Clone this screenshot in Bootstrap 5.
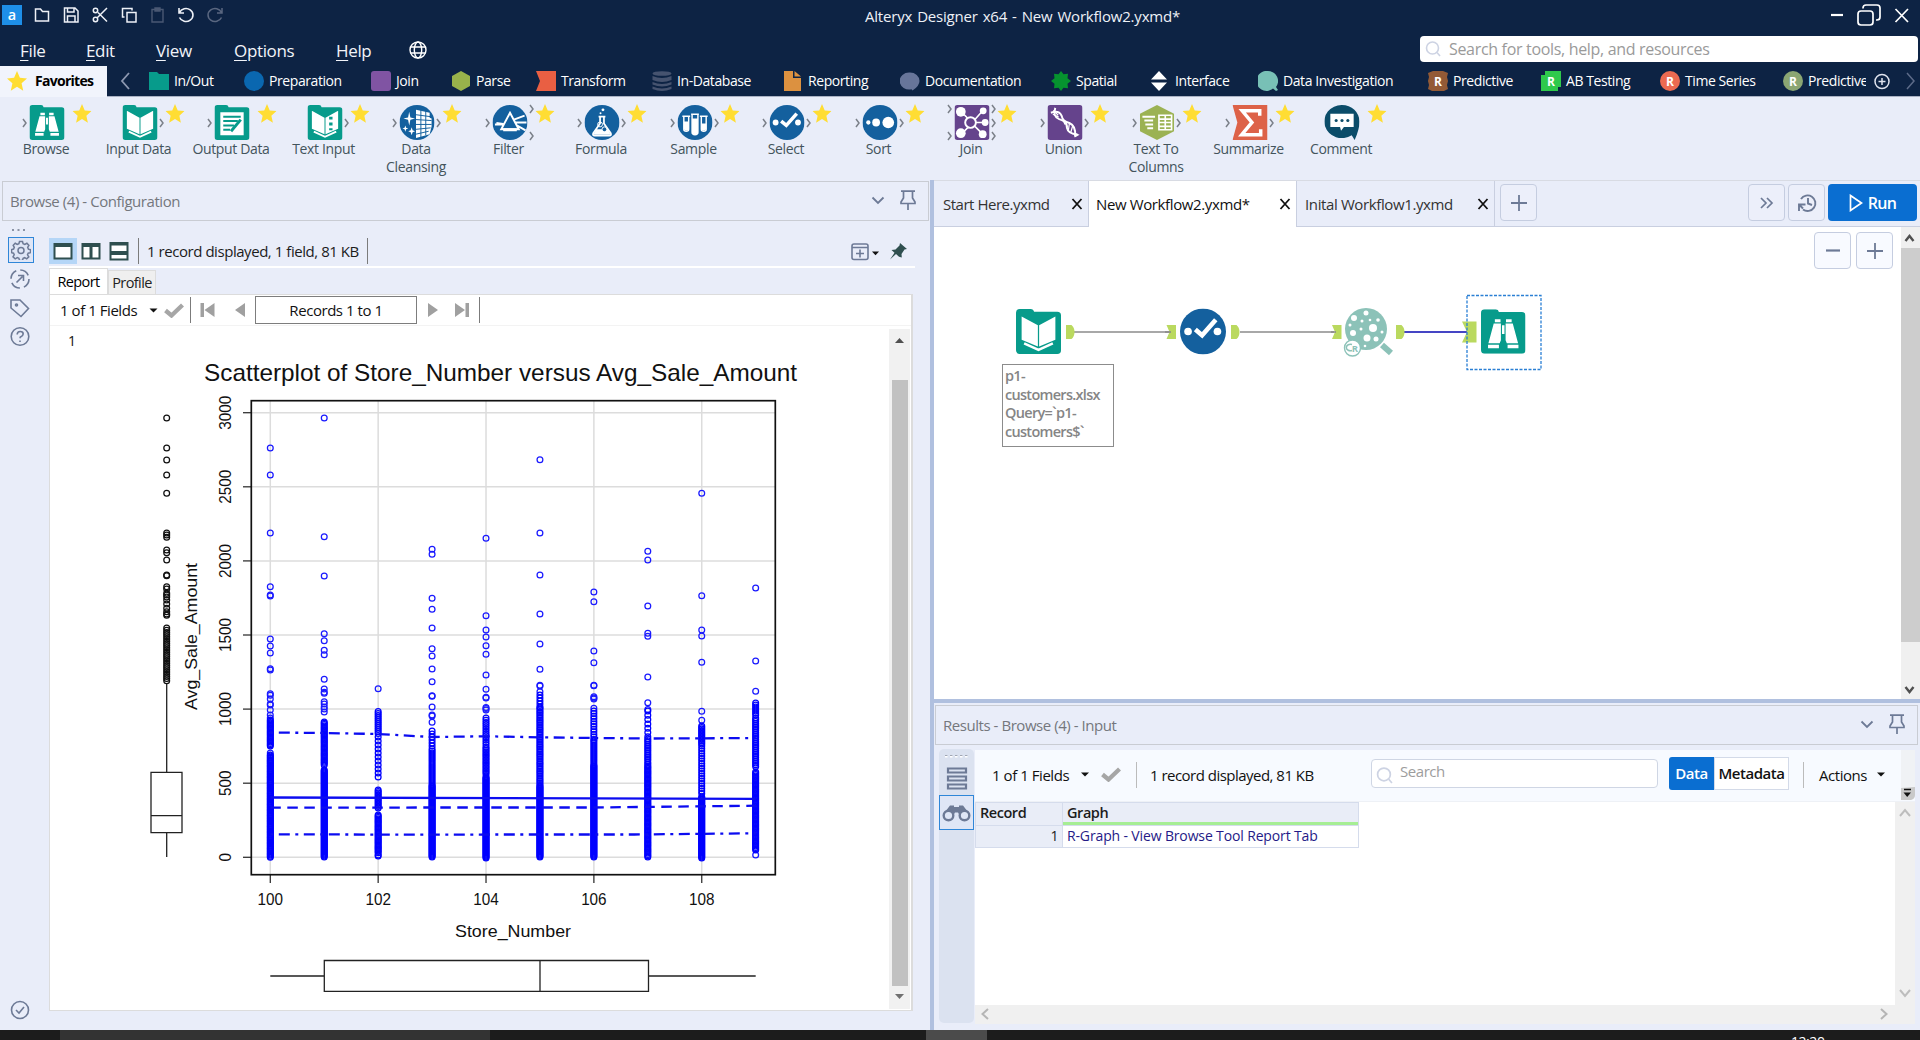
<!DOCTYPE html>
<html lang="en">
<head>
<meta charset="utf-8">
<title>Alteryx Designer x64 - New Workflow2.yxmd*</title>
<link href="https://cdn.jsdelivr.net/npm/bootstrap@5.3.0/dist/css/bootstrap.min.css" rel="stylesheet">
<style>
:root{--navy:#0d2344;--pane:#e9edf9;--line:#c9ccd3;--split:#b0c0df;--slate:#6d7a96;--blue:#0a6ed1}
body{width:1920px;height:1040px;overflow:hidden;background:var(--pane);font-family:"Open Sans","Noto Sans",sans-serif;font-size:15px;line-height:20px;letter-spacing:-.45px;color:#1c1c1c}
svg{display:block;flex:none}
svg text{letter-spacing:0}
.text-nowrap,span{white-space:nowrap}
.titlebar{height:30px;background:var(--navy);color:#eef1f7}
.quick{width:700px;padding-left:2px}
.quick svg{margin-right:9px}
.apptitle{width:484px;font-size:15px;letter-spacing:-.2px;word-spacing:1.3px;padding-top:1px;padding-left:165px}
.menubar{height:36px;background:var(--navy);color:#f2f4f9;font-size:17px;letter-spacing:-.35px}
.menuitem{display:block;padding-left:20px;padding-top:11px}
.menuitem::first-letter{text-decoration:underline;text-underline-offset:3px}
.globe{margin-top:11px}
.topsearch{width:498px;height:26px;background:#fff;border-radius:4px;color:#9a9a9a;font-size:16px;margin:0 2px 4px 0;padding:0 0 1px 5px;letter-spacing:-.32px}
.catbar{height:31px;background:var(--navy);color:#fff;font-size:14px;letter-spacing:-.42px;border-bottom:1px solid #aab2c4}
.fav{width:107px;height:31px;background:#f1f4fc;color:#000;font-weight:700;font-size:14px;letter-spacing:-.72px;padding-left:7px}
.cat svg{margin-right:5px}
.palette{height:83px;padding-top:7px}
.tool{width:92.5px;font-size:14px;line-height:17.5px;color:#43545c;text-align:center;letter-spacing:-.35px}
.tool .lab{white-space:normal;width:86px;margin:-2px auto 0 3px;padding:0;display:block}
.panehead{border:1px solid var(--line);height:40px;color:#74777d;padding-bottom:1px}
.panehead span{padding-left:7px}
.leftpane{width:930px;height:850px;padding:1px 1px 0 2px}
.splitter{width:4px;background:var(--split);height:850px}
.rail{width:47px;padding-top:8px;padding-left:6px}
.railbox{width:26px;height:26px;border:1px solid #2f86d8;background:#dfe6f6}
.leftbody{width:866px}
.viewbar{height:47px;border-bottom:2px solid #fff;padding-bottom:2px}
.vrule{width:1px;height:26px;background:#7b7b7b}
.viewbtn{width:28px;height:26px}
.viewbtn.on{background:#b5d6f7}
.rtab{height:24px;border:1px solid #dcdcdc;border-bottom:0;background:#efefef;color:#222;font-size:14.5px;letter-spacing:-.6px}
.rtab.on{background:#fff;height:26px;color:#000}
.report{width:864px;height:717px;border:1px solid #dcdcdc;border-right-width:2px;background:#fff}
.navrow{height:31px;border-bottom:1px solid #f3f3f3;color:#111}
.recbox{width:162px;height:28px;border:1px solid #7d7d7d;text-align:center;padding-top:3px}
.vscroll{width:21px;background:#f1f1f1}
.thumb{background:#c1c1c1}
.tabrow{height:47px;border-top:1px solid #d8dbe3;border-bottom:1px solid #c9cfe0}
.dtab{height:46px;border-right:1px solid #c9cfe0;color:#333;padding:0 5px 1px 9px;letter-spacing:-.48px}
.dtab.on{background:#fff;color:#111;height:47px;padding-left:7px;padding-bottom:2px;letter-spacing:-.38px}
.sqbtn{width:37px;height:37px;border:1px solid #c5cde0;border-radius:4px;background:#eceffa}
.zoomset .sqbtn{background:#f8faff}
.runbtn{width:89px;height:37px;background:var(--blue);border-radius:4px;color:#fff;font-weight:600;font-size:16px;letter-spacing:-.6px}
.canvas{height:472px;background:#fff}
.cscroll{width:19px;background:#f0f0f0}
.cscroll .thumb{background:#cdcdcd}
.note{left:68px;top:137px;width:112px;height:83px;border:1px solid #8c8c8c;color:#858585;font-weight:600;font-size:14.5px;line-height:18.7px;letter-spacing:-.7px;padding:2px 2px;background:#fff}
.note span{display:block}
.zoomset{right:27px;top:5px;gap:5px}
.resrail{width:35px;height:274px;background:#dbe2f0;border-radius:5px;margin:4px 1px 0 1px;padding-top:6px}
.resrail .railbox{width:35px;height:35px}
.resmain{width:940px;margin-top:5px}
.resbar{height:52px;background:#f7faff;border-bottom:1px solid #eef1f6;color:#111;padding-bottom:2px}
.resbar .vrule{background:#bbb}
.ressearch{width:287px;height:29px;border:1px solid #cfd6e4;border-radius:4px;background:#fff;color:#9d9d9d}
.segl{width:45px;height:33px;background:var(--blue);color:#fff;font-weight:600;border-radius:3px 0 0 3px}
.segr{width:75px;height:33px;background:#fff;border:1px solid #d3dae8;font-weight:600;color:#111}
.grid2{width:384px;border:1px solid #d5dcec}
.grid2 .hd{height:22px;background:#e9edf7;font-weight:600;font-size:14.5px}
.grid2 .c1{width:87px;border-right:1px solid #d5dcec}
.grid2 .rw{height:22px;border-top:1px solid #d5dcec;font-size:14px}
.linkish{color:#251a87;letter-spacing:-.14px}
.taskbar{height:10px;background:#1c1c1c;color:#fff;overflow:hidden}
</style>
</head>
<body class="d-flex flex-column">
<svg width="0" height="0" class="position-absolute">
<defs>
<symbol id="star" viewBox="0 0 20 20"><path fill="#ffdd33" d="M10 0l2.9 6.8 7.1.6-5.400 4.900 1.600 7.400-6.200-3.900-6.200 3.900 1.600-7.400L0 7.400l7.100-.6z"/></symbol>
<symbol id="fold" viewBox="0 0 36 36"><path fill="#079b8b" d="M0 3q0-3 3-3h9q2 0 2.500 2.200H33q3 0 3 3V33q0 3-3 3H3q-3 0-3-3z"/></symbol>
<symbol id="browse" viewBox="0 0 36 36"><use href="#fold"/><g fill="#fff"><path d="M11.200 8h4.600v2.500h-4.600zM20.200 8h4.600v2.500h-4.600zM10.300 11.500h5.800V25l-1 2.500H6zM25.700 11.500h-5.800V25l1 2.500H30zM17 13h2v7h-2zM5.700 28.700h8.800v2.800H5.700zM21.500 28.700h8.800v2.800h-8.800z"/></g></symbol>
<symbol id="input" viewBox="0 0 36 36"><use href="#fold"/><g fill="#fff"><path d="M4.500 6l13 7v17l-13-5.500zM31.500 6l-13 7v17l13-5.500z"/></g><path d="M6.500 27.500l11.500 5.200 11.500-5.200" fill="none" stroke="#fff" stroke-width="2"/></symbol>
<symbol id="output" viewBox="0 0 36 36"><use href="#fold"/><path d="M6 7.500h24V31H6z" fill="#fff"/><path d="M9 12h18M9 16.500h15M9 21h11M9 25.500h7" stroke="#079b8b" stroke-width="2"/><path d="M17 27l10-12" stroke="#079b8b" stroke-width="3"/></symbol>
<symbol id="textin" viewBox="0 0 36 36"><use href="#fold"/><path d="M4.500 6l13 7v17l-13-5.500zM31.500 6l-13 7v17l13-5.500z" fill="#fff"/><path d="M6.500 27.500l11.500 5.200 11.500-5.200" fill="none" stroke="#fff" stroke-width="2"/><path d="M24 12v3M24 18v3M24 24v2" stroke="#079b8b" stroke-width="3.500"/></symbol>
<symbol id="disc" viewBox="0 0 36 36"><circle cx="18" cy="18" r="18" fill="#14609e"/></symbol>
<symbol id="cleanse" viewBox="0 0 36 36"><use href="#disc"/><path fill="#fff" d="M10 7l1.200 5.800L16 14l-4.800 1.200L10 21l-1.200-5.800L4 14l4.800-1.200zM6 21l.8 2.500 2.200.7-2.200.7L6 27.500l-.8-2.600-2.200-.7 2.200-.7zM12.500 23l1 3 2.500 1-2.500 1-1 3-1-3-2.500-1 2.500-1zM17 5l14 3v5l2 1v8l-2 8-14 4z"/><path d="M17 10l15 2M17 15l16 1M17 20h16M17 25l15-1.500M17 30l13-3M22 5v28M27 6v25" stroke="#14609e" stroke-width="1"/></symbol>
<symbol id="filter" viewBox="0 0 36 36"><use href="#disc"/><path d="M18 8l9 17H9zM2.500 20h9M22 15l11-4M23 18l12 0M25 21l9 5M4 18.500l7 1" fill="none" stroke="#fff" stroke-width="2"/><path d="M11 25.500h14" stroke="#fff" stroke-width="3"/></symbol>
<symbol id="formula" viewBox="0 0 36 36"><use href="#disc"/><path d="M14.500 12h7M16 12v7L9 29q-1 2.500 1.500 2.500h15q2.500 0 1.500-2.500L20 19v-7" fill="none" stroke="#fff" stroke-width="1.800"/><path d="M12 25h12l3 5.500H9z" fill="#fff"/><circle cx="19" cy="5" r="1.500" fill="#fff"/><circle cx="16.500" cy="8.500" r="1" fill="#fff"/><circle cx="16" cy="20" r="2.500" fill="none" stroke="#fff"/><circle cx="20.500" cy="25" r="2.500" fill="#14609e" stroke="#fff"/></symbol>
<symbol id="sample" viewBox="0 0 36 36"><use href="#disc"/><g fill="none" stroke="#fff" stroke-width="1.500"><path d="M5 11.500h8M14 9.500h8M23 11.500h8M6.500 11v14q0 2 2.500 2t2.500-2V11M15 9v19q0 2.500 3 2.500t3-2.500V9M24.500 11v14q0 2 2.500 2t2.500-2V11"/></g><path d="M6.500 17h5v8q-2.500 3-5 0zM15 14h6v15q-3 2-6 0zM24.500 19h5v6q-2.500 3-5 0z" fill="#fff"/></symbol>
<symbol id="select" viewBox="0 0 36 36"><use href="#disc"/><circle cx="6.300" cy="18" r="3" fill="#fff"/><circle cx="29.300" cy="18" r="3" fill="#fff"/><path d="M12 16.500l5.300 4.500L28 8.800" fill="none" stroke="#fff" stroke-width="3.600"/></symbol>
<symbol id="sort" viewBox="0 0 36 36"><use href="#disc"/><circle cx="6" cy="18" r="2.200" fill="#fff"/><circle cx="14" cy="18" r="4" fill="#fff"/><circle cx="26.500" cy="18" r="6" fill="#fff"/></symbol>
<symbol id="join" viewBox="0 0 36 36"><rect width="36" height="36" rx="3" fill="#65438c"/><g stroke="#fff" stroke-width="1.600"><path d="M7 7l8 8M29 6l-8 9M7 30l8-8M29 30l-8-8M21 18h9"/></g><circle cx="16.500" cy="18" r="5.500" fill="#65438c" stroke="#fff" stroke-width="2"/><g fill="#fff"><circle cx="6.500" cy="7" r="5"/><circle cx="29.500" cy="6" r="3.500"/><circle cx="31.500" cy="18" r="3.500"/><circle cx="6.500" cy="29" r="5"/><circle cx="29" cy="30" r="4"/></g></symbol>
<symbol id="union" viewBox="0 0 36 36"><rect width="36" height="36" rx="3" fill="#65438c"/><g fill="none" stroke="#fff"><path d="M8 3q-3 9 4 11.500q8 2 8 9q1 6 11 7" stroke-width="2"/><path d="M3.500 8q8-3 11 3q1 6 8 7.500q7 3 6 14" stroke-width="2"/><path d="M6 5.500l5 5M5.500 9.500l6 3M16 15l2 5M19 17l1.500 6M22.500 19l-1 7M26 21l-2 7" stroke-width="1.300"/></g><path d="M27 28l6 2.500-5 3z" fill="#fff"/></symbol>
<symbol id="t2c" viewBox="0 0 36 36"><path fill="#9bb253" d="M18 0l17.500 9v18L18 36 .5 27V9z"/><g stroke="#fff" stroke-width="2"><path d="M3 12h13M5 16h9M6 20h8M8 24h6"/></g><path d="M20 10.500h13v15H20zM20 14.500h13M20 18h13M20 22h13M26.500 10v16" fill="none" stroke="#fff" stroke-width="1.700"/></symbol>
<symbol id="sum" viewBox="0 0 36 36"><path fill="#dd6248" d="M0 0h36v36H0l5-18z"/><path d="M28 11V6H10l10 12L9.500 30.500H29V25" fill="none" stroke="#fff" stroke-width="3.600"/></symbol>
<symbol id="comment" viewBox="0 0 36 36"><path fill="#0b4c69" d="M18 0a18 17 0 0 1 18 17q0 8-5 19l-3-5A18 17 0 1 1 18 0z"/><path fill="#fff" d="M6 9h24v13.500H20l-3 4-1-4H6z"/><g fill="#0b4c69"><circle cx="12" cy="16" r="1.600"/><circle cx="18" cy="16" r="1.600"/><circle cx="24" cy="16" r="1.600"/></g></symbol>
<symbol id="pin" viewBox="0 0 16 21"><path d="M1 1.200h14M3.500 1.500v6.500L1 12v1.500h14V12l-2.500-4V1.500M8 13.500V20" fill="none" stroke="#6d7a96" stroke-width="1.700"/></symbol>
<symbol id="chev" viewBox="0 0 14 9"><path d="M1.500 1.500L7 7l5.500-5.500" fill="none" stroke="#6d7a96" stroke-width="1.800"/></symbol>
<symbol id="check" viewBox="0 0 20 15"><path d="M1.500 7.500l6 5L18.500 2" fill="none" stroke="#a6a6a6" stroke-width="4.300"/></symbol>
<symbol id="lens" viewBox="0 0 16 16"><circle cx="7.500" cy="7" r="6" fill="none" stroke="#cdd3e3" stroke-width="1.600"/><path d="M12 11.500l3 3.500" stroke="#cdd3e3" stroke-width="1.600"/></symbol>
<symbol id="xx" viewBox="0 0 12 12"><path d="M1.500 1l9 10M10.500 1l-9 10" stroke="#111" stroke-width="1.800"/></symbol>
<symbol id="plus" viewBox="0 0 16 16"><path d="M8 0v16M0 8h16" stroke="#6d7a96" stroke-width="1.800"/></symbol>
<symbol id="caret" viewBox="0 0 8 5"><path d="M0 .5h8L4 4.500z" fill="#111"/></symbol>
</defs>
</svg>

<header>
 <div class="titlebar d-flex">
  <div class="quick d-flex align-items-center">
   <svg width="20" height="20" viewBox="0 0 20 20"><rect width="20" height="20" fill="#1e8fe8"/><text x="10" y="14.500" font-size="14.500" font-weight="600" font-family="Open Sans" text-anchor="middle" fill="#fff">a</text></svg>
   <svg width="20" height="18" viewBox="0 0 20 18"><path d="M4.500 3h5l2 2.500h6V15h-13z" fill="none" stroke="#eef1f7" stroke-width="1.500"/></svg>
   <svg width="20" height="18" viewBox="0 0 20 18"><path d="M4.500 2H15l3 3v11H4.500zM7.500 2v4H14V2M7.500 16v-6H15v6" fill="none" stroke="#eef1f7" stroke-width="1.500"/></svg>
   <svg width="20" height="18" viewBox="0 0 20 18"><path d="M18 2L8 12M9 6.500l9 9" stroke="#eef1f7" stroke-width="1.500"/><circle cx="6.500" cy="4.500" r="2.200" fill="none" stroke="#eef1f7" stroke-width="1.500"/><circle cx="6.500" cy="13.500" r="2.200" fill="none" stroke="#eef1f7" stroke-width="1.500"/></svg>
   <svg width="20" height="18" viewBox="0 0 20 18"><path d="M9 6.500h9V16H9zM6.500 11h-2V2.500H14v2" fill="none" stroke="#eef1f7" stroke-width="1.500"/></svg>
   <svg width="20" height="18" viewBox="0 0 20 18"><path d="M5 3.500h11V16H5zM8 2h5v3H8z" fill="none" stroke="#4a5873" stroke-width="1.400"/></svg>
   <svg width="20" height="18" viewBox="0 0 20 18"><path d="M3 2v5h5M3.500 6.500a7 6.500 0 1 1 0 5" fill="none" stroke="#eef1f7" stroke-width="1.600"/></svg>
   <svg width="20" height="18" viewBox="0 0 20 18"><path d="M17 2v5h-5M16.500 6.500a7 6.500 0 1 0 0 5" fill="none" stroke="#5a6780" stroke-width="1.500"/></svg>
  </div>
  <div class="apptitle d-flex align-items-center"><span>Alteryx Designer x64 - New Workflow2.yxmd*</span></div>
  <div class="d-flex align-items-center ms-auto pe-2">
   <svg width="84" height="26" viewBox="0 0 84 26"><path d="M3 13h12" stroke="#fff" stroke-width="2.200"/><g fill="none" stroke="#fff" stroke-width="1.700"><rect x="30" y="9" width="15" height="14" rx="3"/><path d="M35 6.500V6q0-3 3-3h11q3 0 3 3v9q0 3-3 3h-1"/><path d="M67.500 7l12.500 13M80 7L67.500 20"/></g></svg>
  </div>
 </div>
 <div class="menubar d-flex">
  <nav class="d-flex">
   <span class="menuitem" style="width:66px">File</span><span class="menuitem" style="width:70px">Edit</span><span class="menuitem" style="width:78px">View</span><span class="menuitem" style="width:102px">Options</span><span class="menuitem" style="width:93px">Help</span>
   <svg width="18" height="18" viewBox="0 0 18 18" class="globe align-self-start" fill="none" stroke="#fff" stroke-width="1.400"><circle cx="9" cy="9" r="8"/><ellipse cx="9" cy="9" rx="3.700" ry="8"/><path d="M1.500 6h15M1.500 12h15"/></svg>
  </nav>
  <div class="topsearch ms-auto d-flex align-items-center mt-auto"><svg width="16" height="16"><use href="#lens"/></svg><span class="ps-2">Search for tools, help, and resources</span></div>
 </div>
 <div class="catbar d-flex align-items-center">
  <div class="fav d-flex align-items-center"><svg width="20" height="20"><use href="#star"/></svg><span class="ps-2">Favorites</span></div>
  <svg width="42" height="18" viewBox="0 0 42 18"><path d="M22 1l-7 8 7 8" fill="none" stroke="#8d98b1" stroke-width="1.800"/></svg>
  <div id="cats" class="d-flex overflow-hidden"></div>
  <svg width="50" height="20" viewBox="0 0 50 20" class="ms-1" fill="none" stroke="#dfe3ee" stroke-width="1.500"><circle cx="12" cy="10.500" r="7"/><path d="M12 7v7M8.500 10.500h7"/><path d="M37 2l7 8-7 8" stroke="#5d6b89"/></svg>
 </div>
 <div class="palette d-flex" id="palette"></div>
</header>

<main class="d-flex">
 <section class="leftpane">
  <div class="panehead d-flex align-items-center"><span>Browse (4) - Configuration</span><svg class="ms-auto" width="14" height="9"><use href="#chev"/></svg><svg width="16" height="21" style="margin:0 12px 0 15px"><use href="#pin"/></svg></div>
  <div class="d-flex">
   <aside class="rail d-flex flex-column">
    <svg width="26" height="8" viewBox="0 0 26 8" fill="#8b93a5"><path d="M4 0h2v2H4zM9.500 0h2v2h-2zM15 0h2v2h-2z"/></svg>
    <div class="railbox d-flex align-items-center justify-content-center"><svg width="20" height="20" viewBox="0 0 20 20" fill="none" stroke="#6d7a96" stroke-width="1.500"><path d="M8.500 1.500h3l.6 2.300 1.700.7 2.100-1.200 2 2.100-1.200 2 .7 1.700 2.100.6v3l-2.300.5-.7 1.600 1.300 2-2.100 2.100-2-1.200-1.600.7-.6 2.100h-3l-.6-2.200-1.600-.7-2.100 1.200L2 16.800l1.200-2-.7-1.600-1.900-.5V9.600l2-.5.7-1.700L2.200 5.300l2-2 2.100 1.200 1.600-.7z"/><circle cx="10" cy="10.500" r="3"/></svg></div>
    <svg width="24" height="88" viewBox="0 0 24 88" fill="none" stroke="#6d7a96" stroke-width="1.600"><circle cx="12" cy="16" r="9" stroke-dasharray="10 4.140"/><path d="M8.500 19.500l6-6M10 12.500h5.500V18"/><path d="M3 37h9l8.500 8.500-7.500 8-10-8.500z"/><circle cx="8.500" cy="42" r="1"/><circle cx="12" cy="73.500" r="8.800"/><path d="M9.200 71.500q0-3 3-3t3 2.500q0 1.700-3 3.200v1"/><path d="M12 77.500v1.600"/></svg>
    <svg width="20" height="20" viewBox="0 0 20 20" fill="none" stroke="#6d7a96" stroke-width="1.600" style="margin:649px 0 0 2px"><circle cx="10" cy="10" r="8.500"/><path d="M6 10l3 3 5-6"/></svg>
   </aside>
   <div class="leftbody">
    <div class="viewbar d-flex align-items-end">
     <div class="viewbtn on d-flex align-items-center justify-content-center"><svg width="20" height="20" viewBox="0 0 20 20"><path d="M1.500 3h17v14.500h-17z" fill="#fff" stroke="#2f4f4f" stroke-width="2"/><path d="M1 2h18v4H1z" fill="#2f4f4f"/></svg></div>
     <div class="viewbtn d-flex align-items-center justify-content-center"><svg width="20" height="20" viewBox="0 0 20 20"><path d="M1.500 3h17v14.500h-17z" fill="#fff" stroke="#2f4f4f" stroke-width="2"/><path d="M1 2h18v4H1zM8.500 3h3v15h-3z" fill="#2f4f4f"/></svg></div>
     <div class="viewbtn d-flex align-items-center justify-content-center"><svg width="20" height="20" viewBox="0 0 20 20"><path d="M1.500 2h17v16.500h-17z" fill="#fff" stroke="#2f4f4f" stroke-width="2"/><path d="M1 1h18v3.500H1zM1 10h18v4H1z" fill="#2f4f4f"/></svg></div>
     <div class="vrule" style="margin:0 8px 0 5px"></div><span style="margin-bottom:3px">1 record displayed, 1 field, 81 KB</span><div class="vrule" style="margin-left:8px"></div>
     <svg class="ms-auto" width="58" height="24" viewBox="0 0 58 24"><g fill="none" stroke="#6d7a96" stroke-width="1.600"><rect x="1" y="4" width="16" height="15.500" rx="2"/><path d="M1 7.500h16M9 9.500v8M5 13.500h8"/></g><path d="M21 11.500h7l-3.500 3.800z" fill="#111"/><path d="M49 3l7 6-2.500.5-3 4.500.3 3.500-2.800-.8-3-2.600-6 5.500 4.500-6.800-3-2.700 4-.6 4-4z" fill="#2f4f4f"/></svg>
     <div style="width:6px"></div>
    </div>
    <div class="d-flex align-items-end" style="height:26px">
     <div class="rtab on d-flex align-items-center justify-content-center" style="width:59px">Report</div><div class="rtab d-flex align-items-center justify-content-center" style="width:48px">Profile</div>
    </div>
    <div class="report">
     <div class="navrow d-flex align-items-center">
      <span style="width:99px;padding-left:10px">1 of 1 Fields</span><svg width="9" height="5"><use href="#caret"/></svg><svg width="20" height="15" style="margin:0 6px 0 6px"><use href="#check"/></svg><div class="vrule"></div>
      <svg width="64" height="16" viewBox="0 0 64 16" fill="#a0a0a0"><path d="M9.500 1H13v14H9.500zM23.500 1v14l-10-7zM54 1v14l-10-7z"/></svg>
      <div class="recbox">Records 1 to 1</div>
      <svg width="62" height="16" viewBox="0 0 62 16" fill="#a0a0a0"><path d="M11 1v14l10-7zM38 1v14l10-7zM48.500 1H52v14h-3.500z"/></svg><div class="vrule"></div>
     </div>
     <div class="d-flex" style="height:684px">
      <svg id="plot" width="839" height="684" viewBox="50 326 839 684" font-family="Liberation Sans" fill="#111"></svg>
      <div class="vscroll d-flex flex-column align-items-center" style="height:680px;margin-top:3px"><svg width="21" height="51" viewBox="0 0 21 51"><path d="M6 14h9l-4.500-5z" fill="#505050"/></svg><div class="thumb" style="width:16px;height:606px"></div><svg width="21" height="22" viewBox="0 0 21 22"><path d="M6 8h9l-4.500 5z" fill="#707070"/></svg></div>
     </div>
    </div>
   </div>
  </div>
 </section>
 <div class="splitter"></div>
 <section class="flex-grow-1">
  <div class="tabrow d-flex">
   <div class="dtab d-flex align-items-center justify-content-between" style="width:155px"><span>Start Here.yxmd</span><svg width="12" height="12"><use href="#xx"/></svg></div>
   <div class="dtab on d-flex align-items-center justify-content-between" style="width:208px"><span>New Workflow2.yxmd*</span><svg width="12" height="12"><use href="#xx"/></svg></div>
   <div class="dtab d-flex align-items-center justify-content-between" style="width:198px;padding-left:8px;letter-spacing:-.38px"><span>Inital Workflow1.yxmd</span><svg width="12" height="12"><use href="#xx"/></svg></div>
   <div class="sqbtn d-flex align-items-center justify-content-center" style="margin:3px 0 0 5px"><svg width="16" height="16"><use href="#plus"/></svg></div>
   <div class="d-flex ms-auto" style="gap:3px;margin:3px 3px 0 0">
    <div class="sqbtn d-flex align-items-center justify-content-center"><svg width="14" height="12" viewBox="0 0 14 12" fill="none" stroke="#6d7a96" stroke-width="1.700"><path d="M1 1l5 5-5 5M7 1l5 5-5 5"/></svg></div>
    <div class="sqbtn d-flex align-items-center justify-content-center"><svg width="20" height="20" viewBox="0 0 20 20" fill="none" stroke="#6d7a96" stroke-width="1.900"><path d="M4 6a7.800 7.800 0 1 1 2 10.500M2 18v-6.500h6.500M2 11.500l4 4M11 5v5.500l4 1.500"/></svg></div>
    <div class="runbtn d-flex align-items-center justify-content-center"><svg width="14" height="18" viewBox="0 0 14 18"><path d="M1.500 1.500l11 7.500-11 7.500z" fill="none" stroke="#fff" stroke-width="1.700"/></svg><span style="padding-left:5px">Run</span></div>
   </div>
  </div>
  <div class="canvas d-flex position-relative">
   <svg width="967" height="472" viewBox="934 227 967 472" class="flex-shrink-0">
    <path d="M1074 332H1170M1240 332H1334" stroke="#a8a8a8" stroke-width="2"/><path d="M1404 332H1468" stroke="#4545c4" stroke-width="2.200"/>
    <g fill="#bad95f"><path d="M1066 325h5.500q3 2.500 3 7t-3 7h-5.500z"/><path d="M1231 325h5.500q3 2.500 3 7t-3 7h-5.500zM1396 325h5.500q3 2.500 3 7t-3 7h-5.500zM1166.500 325h9.500v14h-9.500l3-7zM1332 325h9.500v14H1332l3-7zM1462 321.500h14.500v21H1462l5-10.500z"/></g>
    <path d="M1165 332h6M1331 332h5" stroke="#888" stroke-width="1.500"/>
    <use href="#input" x="1016" y="309" width="45" height="45"/>
    <use href="#select" x="1180" y="308.500" width="46" height="46"/>
    <circle cx="1366" cy="329" r="21" fill="#8cc2b8"/>
    <g fill="#fff"><circle cx="1354" cy="318" r="3"/><circle cx="1366" cy="313" r="2.500"/><circle cx="1378" cy="320" r="1.800"/><circle cx="1362" cy="321" r="1.500"/><circle cx="1373" cy="328" r="4"/><circle cx="1353" cy="333" r="3"/><circle cx="1367" cy="338" r="3.500"/><circle cx="1376" cy="339" r="2.500"/><circle cx="1361" cy="329" r="1.500"/><circle cx="1370" cy="320" r="1.300"/><circle cx="1382" cy="332" r="1.500"/><circle cx="1365" cy="346" r="1.300"/><circle cx="1350" cy="325" r="1.500"/></g>
    <path d="M1382 345l9 8" stroke="#8cc2b8" stroke-width="6"/><circle cx="1352.500" cy="348" r="8" fill="#fff" stroke="#8cc2b8" stroke-width="1.400"/><path d="M1352 344.500a4 3.300 0 1 0 0 6" fill="none" stroke="#8cc2b8" stroke-width="1.500"/><text x="1355" y="352" font-family="Open Sans" font-size="9.500" font-weight="700" text-anchor="middle" fill="#8cc2b8">R</text>
    <rect x="1467" y="295.500" width="74" height="74" fill="none" stroke="#2a7fd4" stroke-width="1.300" stroke-dasharray="3 1.500"/>
    <use href="#browse" x="1481" y="309" width="44.500" height="45"/>
   </svg>
   <div class="note position-absolute"><span>p1-</span><span>customers.xlsx</span><span>Query=`p1-</span><span>customers$`</span></div>
   <div class="zoomset position-absolute d-flex"><div class="sqbtn d-flex align-items-center justify-content-center"><svg width="14" height="3" viewBox="0 0 14 3"><path d="M0 1.500h14" stroke="#6d7a96" stroke-width="2.200"/></svg></div><div class="sqbtn d-flex align-items-center justify-content-center"><svg width="16" height="16"><use href="#plus"/></svg></div></div>
   <div class="cscroll"><svg width="19" height="21" viewBox="0 0 19 21"><path d="M4.500 14l4-5 4 5" fill="none" stroke="#505050" stroke-width="2.400"/></svg><div class="thumb" style="height:394px"></div><svg width="19" height="57" viewBox="0 0 19 57"><path d="M4.500 45l4 5 4-5" fill="none" stroke="#505050" stroke-width="2.400"/></svg></div>
  </div>
  <div style="height:4px;background:var(--split)"></div>
  <div class="panehead d-flex align-items-center" style="margin:2px 2px 0 1px"><span>Results - Browse (4) - Input</span><svg class="ms-auto" width="14" height="9"><use href="#chev"/></svg><svg width="16" height="21" style="margin:0 12px 0 15px"><use href="#pin"/></svg></div>
  <div class="d-flex ps-1">
   <aside class="resrail d-flex flex-column align-items-center">
    <svg width="25" height="12" viewBox="0 0 25 12"><path d="M1 1h24" stroke="#fff" stroke-width="3" stroke-dasharray="2.500 2.500"/><path d="M1 0h24" stroke="#a0a6b3" stroke-width="2" stroke-dasharray="2.500 2.500"/></svg>
    <svg width="22" height="28" viewBox="0 0 22 28" fill="none" stroke="#6d7a96" stroke-width="2.200"><path d="M2 1.500h18v4H2zM2 9.500h18v4H2zM2 17.500h18v4H2z"/></svg>
    <div class="railbox d-flex align-items-center justify-content-center"><svg width="29" height="20" viewBox="0 0 29 20"><path d="M1.500 11L8 2.500h4V4h5V2.500h4L27.500 11 20 12h-2.500L16 9.500h-3L11.500 12z" fill="#6d7a96"/><g fill="#dfe6f6" stroke="#6d7a96" stroke-width="2.400"><circle cx="6.500" cy="12.500" r="4.800"/><circle cx="22.500" cy="12.500" r="4.800"/></g></svg></div>
   </aside>
   <div class="resmain">
    <div class="resbar d-flex align-items-center">
     <span style="padding-left:17px;width:106px">1 of 1 Fields</span><svg width="8" height="5"><use href="#caret"/></svg><svg width="20" height="15" style="margin:0 15px 0 12px"><use href="#check"/></svg><div class="vrule"></div>
     <span style="padding-left:13px;width:234px;letter-spacing:-.52px">1 record displayed, 81 KB</span>
     <div class="ressearch d-flex align-items-center ps-1" style="margin-bottom:3px"><svg width="17" height="17" class="mt-1"><use href="#lens"/></svg><span style="padding:0 0 4px 7px">Search</span></div>
     <div class="d-flex" style="margin:0 14px 3px 11px"><div class="segl d-flex align-items-center justify-content-center">Data</div><div class="segr d-flex align-items-center justify-content-center">Metadata</div></div>
     <div class="vrule"></div><span style="padding-left:15px;width:73px">Actions</span><svg width="8" height="5"><use href="#caret"/></svg>
     <svg width="14" height="50" viewBox="0 0 14 50" class="ms-auto"><path d="M0 0h14v38H0z" fill="#f0f2f5"/><path d="M0 38l14-1v8q0 4-4 5H0z" fill="#c9c9c9"/><path d="M3 39.500h7" stroke="#111" stroke-width="1.500"/><path d="M2.500 42.500h7.500L6.200 47z" fill="#111"/></svg>
    </div>
    <div class="d-flex bg-white" style="height:203px">
     <div style="width:920px"><div class="grid2">
      <div class="hd d-flex"><div class="c1" style="padding-left:4px">Record</div><div class="flex-grow-1 ps-1" style="border-bottom:3px solid #a6ee94">Graph</div></div>
      <div class="rw d-flex"><div class="c1 text-end pe-1" style="background:#e9edf7">1</div><div class="ps-1 linkish">R-Graph - View Browse Tool Report Tab</div></div>
     </div></div>
     <svg width="20" height="203" viewBox="0 0 20 203"><path d="M0 0h20v203H0z" fill="#f0f0f0"/><path d="M5 14l5-6 5 6M5 188l5 6 5-6" fill="none" stroke="#bdbdbd" stroke-width="2"/></svg>
    </div>
    <svg width="940" height="19" viewBox="0 0 940 19"><path d="M0 0h940v19H0z" fill="#f0f0f0"/><path d="M13 4l-5.500 5 5.500 5M906 4l5.500 5-5.500 5" fill="none" stroke="#b5b5b5" stroke-width="2"/></svg>
   </div>
  </div>
 </section>
</main>
<footer class="taskbar d-flex"><div style="width:60px"></div><div style="width:430px;background:#333"></div><div style="width:436px"></div><div style="width:61px;background:#4b4b4b"></div><span style="padding:2px 0 0 804px;font-size:14px">12:20</span></footer>

<script>
const cats=[
 ["In/Out",95,'<path d="M0 1h8l2 2h10v16H0z" fill="#079b8b"/>'],
 ["Preparation",127,'<circle cx="10" cy="10" r="10" fill="#0a67b0"/>'],
 ["Join",80,'<rect width="20" height="20" rx="3" fill="#8054a3"/>'],
 ["Parse",85,'<path d="M10 0l9 5v10l-9 5-9-5V5z" fill="#98b24b"/>'],
 ["Transform",116,'<path d="M0 0h20v20H0l4-10z" fill="#e95f43"/>'],
 ["In-Database",131,'<g fill="#46536f"><ellipse cx="10" cy="2.500" rx="9.500" ry="2.300"/><path d="M.5 5q9.500 4 19 0v4q-9.500 4-19 0zM.5 11q9.500 4 19 0v2.500q-9.500 4-19 0zM.5 15.500q9.500 4 19 0V18q-9.500 4-19 0z"/></g>'],
 ["Reporting",117,'<path d="M1 0h9v7h8v13H1zM11.500 0l6.500 5.500h-6.500z" fill="#dc9140"/>'],
 ["Documentation",151,'<path d="M10 1.500a9.500 8.500 0 0 1 9.500 8.500q0 5-7 9.500l-1-1.300A9.500 8.500 0 1 1 10 1.500z" fill="#67759a"/>'],
 ["Spatial",99,'<path d="M10 0l2.500 3.200 4.500-.5-.5 4.500L20 10l-3.500 2.800.5 4.500-4.500-.5L10 20l-2.500-3.200-4.500.5.500-4.500L0 10l3.500-2.800L3 2.700l4.500.5z" fill="#06932f"/>'],
 ["Interface",108,'<path d="M9 0l8 8.500H1zM9 20l8-8.500H1z" fill="#fff"/>'],
 ["Data Investigation",170,'<path d="M10 0a10 10 0 0 1 8 16l2 3-2 1-3-2.500A10 10 0 1 1 10 0z" fill="#78c0b6"/>'],
 ["Predictive",113,'<path d="M0 2l5-2h10l5 2-1 4 1 4-1 4 1 4-4 2H4l-4-2 1-4-1-4 1-4z" fill="#935a36"/>',1],
 ["AB Testing",119,'<path d="M4 0h16v16h-3v4H0V4h4z" fill="#2fc94c"/>',1],
 ["Time Series",123,'<circle cx="10" cy="10" r="10" fill="#ec6a51"/>',1],
 ["Predictive",83,'<circle cx="10" cy="10" r="10" fill="#8ba673"/>',1]];
document.getElementById('cats').innerHTML=cats.map(([t,w,s,r])=>`<div class="cat d-flex align-items-center flex-shrink-0" style="width:${w}px"><svg width="20" height="20" viewBox="0 0 20 20">${s}${r?'<text x="10" y="14.500" font-size="12" font-weight="700" font-family="Open Sans" text-anchor="middle" fill="#fff">R</text>':''}</svg><span>${t}</span></div>`).join('');

/* each tool: label, symbol, anchor arrows on the left and right (vertical offsets) */
const M=[18],tools=[["Browse","browse",M,[]],["Input Data","input",[],M],["Output Data","output",M,[]],["Text Input","textin",[],M],["Data Cleansing","cleanse",M,M],["Filter","filter",M,[4,31]],["Formula","formula",M,M],["Sample","sample",M,M],["Select","select",M,M],["Sort","sort",M,M],["Join","join",[4,31],[4,18,31]],["Union","union",M,M],["Text To Columns","t2c",M,M],["Summarize","sum",M,M],["Comment","comment",[],[]]];
const arrow=(x,y)=>`<path d="M${x} ${y-4}l3 4-3 4" fill="none" stroke="#7b8089" stroke-width="1.500"/>`;
document.getElementById('palette').innerHTML=tools.map(([t,id,l,r])=>`<div class="tool flex-shrink-0"><svg width="92" height="38" viewBox="0 0 92 38">${l.map(y=>arrow(23,y+1)).join('')}${r.map(y=>arrow(67,y+1)).join('')}<use href="#${id}" x="29.500" y="1" width="35" height="35"/><use href="#star" x="72.500" y="0" width="19" height="19"/></svg><span class="lab">${t}</span></div>`).join('');

/* scatter plot with marginal box plots */
const X=n=>270.3+(n-100)*53.93,Y=v=>857.3-v*.14820;
let o='';
const line=(x1,y1,x2,y2,c,w)=>{o+=`<path d="M${x1} ${y1}L${x2} ${y2}" stroke="${c}" stroke-width="${w}" fill="none"/>`};
for(let n=100;n<109;n+=2){line(X(n),401,X(n),875,'#dcdcdc',1.5);line(X(n),875,X(n),883,'#333',1.3);o+=`<text x="${X(n)}" y="905" font-size="16.500" text-anchor="middle" textLength="25.500" lengthAdjust="spacingAndGlyphs">${n}</text>`}
for(let v=0;v<=3000;v+=500){line(251,Y(v),775,Y(v),'#dcdcdc',1.5);line(243,Y(v),251,Y(v),'#333',1.3);o+=`<text transform="translate(231 ${Y(v)})rotate(-90)" font-size="16.500" text-anchor="middle" textLength="${v?(v<1000?25.5:34):8.5}" lengthAdjust="spacingAndGlyphs">${v}</text>`}
const pts={
100:[[448,475,533,586.700,595,596,639,646,653,668.700,670,693.700,695.300,699,704,705,710,715,718,753],[[720,747,1.300],[755,857.500,1.100]]],
101:[[418,536.700,576,633.700,640.700,650.300,654.700,679.300,689,692.300,693.300,701.700,704,707,709,712],[[722,766,1.300],[770,857.500,1]]],
102:[[688.700],[[711.500,735,2],[737,777,4],[790,808,1.500],[815,853,1.300],[855,856,1]]],
103:[[549.300,554.300,598.300,609.300,628,648.700,656,669,681.700,695.700,696.300,707,715,716,722.300],[[731,750,3],[751,783,2],[785,857,1]]],
104:[[538.300,615.700,630,637,645.700,654.300,675,689.300,697.300,698,707.500,708.500,710],[[718,745,2.200],[747,775,1.600],[777,858,1]]],
105:[[459.700,533,575,614,644,669.300,685.300,686,691.700],[[695,707,3],[708,785,1.700],[786,857.500,1]]],
106:[[592,601.700,651,662.700,685.300,685.700,696.700,698,699,708.300],[[711,740,2.600],[741,765,2],[766,857,1]]],
107:[[551.300,560,606,633.300,636.300,677,702.700,709.500],[[711,738,4.300],[739,765,1.800],[766,857,1.300]]],
108:[[493.300,595.700,630,636,662.300,711.300,720.300],[[726,744,1.500],[746,795,2.500],[797,858,1]]],
109:[[588,661,691.300,855],[[703,716,2],[718,767,1.800],[772,850,1.300]]]};
const ring=(x,y,c)=>{o+=`<circle cx="${x}" cy="${y}" r="2.900" fill="none" stroke="${c}" stroke-width="1.250"/>`};
for(const n in pts){pts[n][0].forEach(y=>ring(X(+n),y,'#1a1aff'));pts[n][1].forEach(([a,b,s])=>{for(let y=a;y<=b;y+=s)ring(X(+n),y,'#0000ff')})}
[418,448,460,475,493.300,533,535,537.300,550,552.700,560,575,575.700,586.700,589,593.300,595,597,600,604,608.300,611.700,614,615.300].forEach(y=>ring(166.700,y,'#111'));
for(let y=628;y<683;y+=2.200)ring(166.700,y,'#111');
const smooth=(ys,d)=>{o+=`<path d="M${ys.map((y,i)=>X(100+i*9/(ys.length-1)).toFixed(1)+' '+y).join('L')}" fill="none" stroke="#0c0cf0" stroke-width="2.300" stroke-dasharray="${d}"/>`};
smooth([797.500,798.800],'none');smooth([807.700,807.500,807.500,805.700],'10.500 6.500');
smooth([732.500,733,734,737,736.300,737.300,738,738.500,738.300,738],'3 5.500 11 5.500');
smooth([834.300,834.600,834.500,834.500,833.300],'3 5.500 11 5.500');
o+='<rect x="251.300" y="400.700" width="524" height="474" fill="none" stroke="#111" stroke-width="1.700"/>';
o+='<g fill="none" stroke="#222" stroke-width="1.300"><path d="M166.700 684V772.300M166.700 832.700V857M151 772.300h31v60.400h-31zM151 815.700h31M270.300 976H324.300M648.500 976H755.700M324.300 960.500H648.500V991.300H324.300zM540 960.500v30.800"/></g>';
o+='<text x="204" y="381" font-size="24" textLength="593" lengthAdjust="spacingAndGlyphs">Scatterplot of Store_Number versus Avg_Sale_Amount</text><text x="455" y="937" font-size="17" textLength="116" lengthAdjust="spacingAndGlyphs">Store_Number</text><text transform="translate(197 710)rotate(-90)" font-size="17" textLength="147" lengthAdjust="spacingAndGlyphs">Avg_Sale_Amount</text><text x="68" y="345.500" font-size="14" font-family="Open Sans">1</text>';
document.getElementById('plot').innerHTML=o;
</script>
<script src="https://cdn.jsdelivr.net/npm/bootstrap@5.3.0/dist/js/bootstrap.bundle.min.js"></script>
</body>
</html>
